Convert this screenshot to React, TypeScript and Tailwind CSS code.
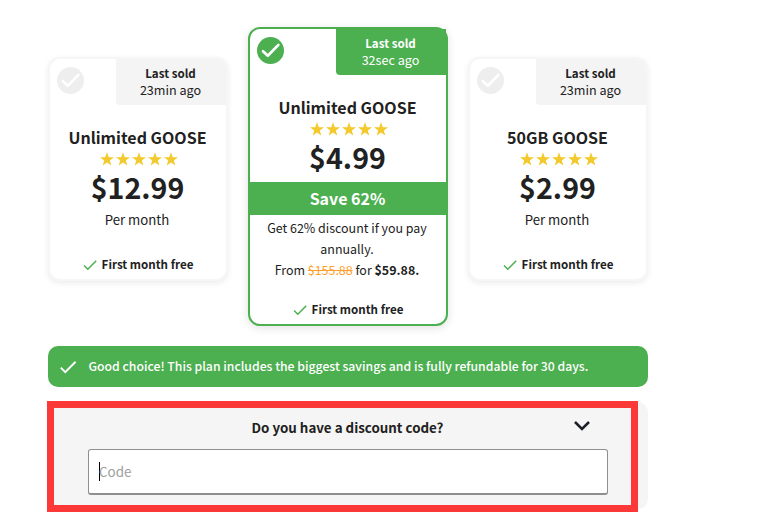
import React from "react";
import { MdCheck } from "react-icons/md";

interface Plan {
  name: string;
  price: string;
  lastSold: string;
  selected?: boolean;
}

const plans: Plan[] = [
  { name: "Unlimited GOOSE", price: "$12.99", lastSold: "23min ago" },
  {
    name: "Unlimited GOOSE",
    price: "$4.99",
    lastSold: "32sec ago",
    selected: true,
  },
  { name: "50GB GOOSE", price: "$2.99", lastSold: "23min ago" },
];

const CheckCircle: React.FC<{ selected?: boolean }> = ({ selected }) => (
  <svg width="27" height="27" viewBox="0 0 27 27" fill="none">
    <circle
      cx="13.5"
      cy="13.5"
      r="13.5"
      className={selected ? "fill-[#4caf50]" : "fill-[#eeeeee]"}
    />
    <path
      d="M6 14.2l4.8 4.6L21.4 7.9"
      stroke="#fff"
      strokeWidth="2.7"
      strokeLinecap="round"
      strokeLinejoin="round"
    />
  </svg>
);

const Star: React.FC = () => (
  <svg width="16" height="16" viewBox="0 0 16 16" fill="currentColor">
    <path d="M8 1.2l1.75 5h5.2l-4.15 3.2 1.5 5L8 11.4l-4.3 3 1.5-5L1.05 6.2h5.2z" />
  </svg>
);

const PlanCard: React.FC<{ plan: Plan }> = ({ plan }) => {
  const { name, price, lastSold, selected } = plan;

  return (
    <div
      className={`flex flex-col rounded-[12px] border-2 bg-white text-center ${
        selected
          ? "h-[299px] w-[200px] border-[#4caf50] shadow-[0_2px_8px_rgba(0,0,0,0.12)]"
          : "mt-[30px] h-[224px] w-[180px] border-[#f6f6f6] shadow-[0_2px_6px_rgba(0,0,0,0.08)]"
      }`}
    >
      {/* Last sold badge */}
      <div className="flex h-[46px] items-start justify-between">
        <div className="pt-[7.5px] pl-[7px]">
          <CheckCircle selected={selected} />
        </div>
        <div
          className={`h-[46px] w-[110px] rounded-bl-[4px] pt-[6px] pr-px text-[12.6px] ${
            selected ? "bg-[#4caf50] text-white" : "rounded-tr-[9px] bg-[#f4f4f4]"
          }`}
        >
          <div className="text-[11.6px] leading-[17px] font-bold">Last sold</div>
          <div className="leading-[15px]">{lastSold}</div>
        </div>
      </div>

      <h2 className="mt-[20px] pr-px text-[16px] leading-[24px] font-bold">
        {name}
      </h2>
      <div className="mt-px flex h-[18px] items-center justify-center pl-px text-[#f4c92b]">
        {[1, 2, 3, 4, 5].map((star) => (
          <Star key={star} />
        ))}
      </div>
      <div className="-mt-[2px] pr-px text-[28.6px] leading-[42px] font-bold">
        {price}
      </div>

      {selected ? (
        <>
          <div className="mt-[4px] h-[33px] bg-[#4caf50] pr-px text-[16px] leading-[33px] font-bold text-white">
            Save 62%
          </div>
          <p className="pt-[3px] pr-[13px] pl-[11px] text-[12.45px] leading-[21px]">
            Get 62% discount if you pay annually.
            <br />
            From <s className="text-[#ff9f2e]">$155.88</s> for{" "}
            <b>$59.88.</b>
          </p>
        </>
      ) : (
        <p className="mt-px pr-[2px] text-[13.2px] leading-[21px]">Per month</p>
      )}

      <div className="mt-auto mb-[4px] flex h-[20px] items-center justify-center gap-[3px] pr-[2px] text-[11.6px] font-bold">
        <MdCheck size={18} className="text-[#4caf50]" />
        First month free
      </div>
    </div>
  );
};

const App: React.FC = () => {
  return (
    <div className="h-[526px] w-[765px] overflow-hidden bg-white pt-[27px] pl-12 font-['Noto_Sans_CJK_SC',sans-serif] text-[#212121]">
      <div className="w-[600px]">
        {/* Plans */}
        <div className="flex items-start gap-5">
          {plans.map((plan, idx) => (
            <PlanCard key={idx} plan={plan} />
          ))}
        </div>

        {/* Selected plan note */}
        <div className="mt-5 flex h-[41px] items-center rounded-[10px] bg-[#4caf50] pl-[9px] text-[12.23px] font-medium text-white">
          <MdCheck size={22} className="mr-[9.5px]" />
          Good choice! This plan includes the biggest savings and is fully
          refundable for 30 days.
        </div>

        {/* Discount code */}
        <div className="relative mt-[15px] h-[107px] rounded-[10px] bg-[#f5f5f5] px-10 pt-[14px]">
          <div className="flex h-[24px] items-center">
            <span className="w-[34px]" />
            <span className="flex-1 text-center text-[13.35px] font-bold">
              Do you have a discount code?
            </span>
            <svg
              width="18"
              height="12"
              viewBox="0 0 18 12"
              fill="none"
              className="mr-[17px] mb-[4px]"
            >
              <path d="M2 2l7 7 7-7" stroke="#1c1f2a" strokeWidth="2.5" />
            </svg>
          </div>
          <div className="mt-[9px] flex h-[46px] items-center rounded-[3px] border border-b-2 border-[#8f8f8f] bg-white pl-[10px]">
            <span className="h-[19px] w-px bg-black" />
            <span className="-mt-px -ml-px text-[13.4px] text-[#9e9e9e]">
              Code
            </span>
          </div>
          <div className="absolute -top-px -left-px h-[111px] w-[591px] border-[7px] border-[#fd3838]" />
        </div>
      </div>
    </div>
  );
};

export default App;
